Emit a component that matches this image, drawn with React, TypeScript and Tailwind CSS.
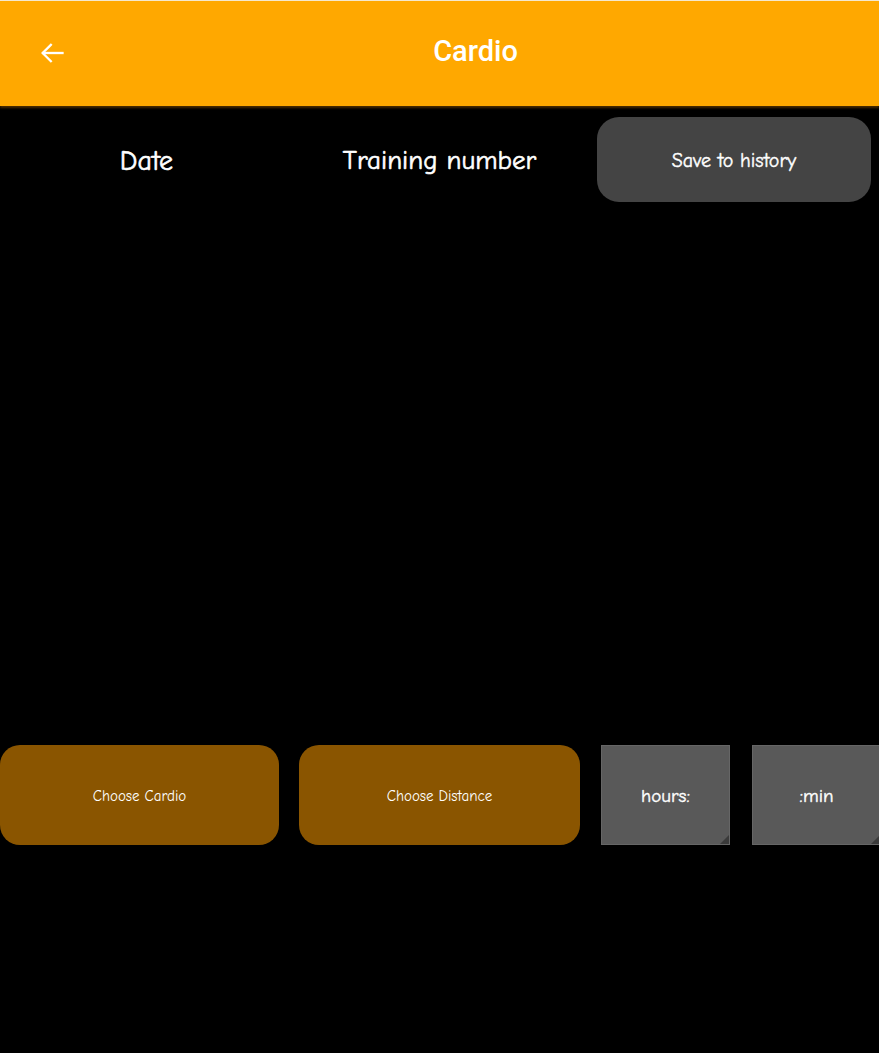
import React from "react";

const comic = { fontFamily: '"Comic Sans MS","Comic Neue","Noto Sans",sans-serif' };

export default function App() {
  return (
    <div className="w-[879px] h-[1053px] bg-black flex flex-col overflow-hidden">
      <div className="h-px bg-[#f6e9cf]" />
      <div className="h-[105px] bg-[#ffa800] flex items-center relative shadow-[0_2px_2px_rgba(120,70,0,0.6)]">
        <div className="w-[104px] flex items-center justify-center -mt-[2px]">
          <svg width="28" height="28" viewBox="0 0 24 24" fill="none" stroke="white" strokeWidth="2" strokeLinecap="square">
            <path d="M21 12H4.5" />
            <path d="M11 5L4 12l7 7" />
          </svg>
        </div>
        <div className="absolute left-0 right-0 top-0 bottom-0 flex items-center justify-center pointer-events-none">
          <span className="text-white text-[29px] font-medium ml-[72px] -mt-[4px]" style={{ fontFamily: "Roboto, sans-serif" }}>
            Cardio
          </span>
        </div>
      </div>
      <div className="flex items-center h-[85px] mt-[11px] [-webkit-text-stroke:0.6px_white]" style={comic}>
        <div className="w-[293px] shrink-0 flex justify-center text-white text-[28px] pt-[3px]">Date</div>
        <div className="w-[293px] shrink-0 flex justify-center text-white text-[27px] pt-[3px]">Training number</div>
        <div className="w-[293px] shrink-0 flex justify-end pr-[8px]">
          <div className="w-[274px] h-[85px] rounded-[22px] bg-[#444444] flex items-center justify-center text-white text-[20px] pt-[2px] [-webkit-text-stroke:0.4px_white]">
            Save to history
          </div>
        </div>
      </div>
      <div className="flex items-stretch h-[100px] mt-[543px]" style={comic}>
        <div className="w-[279px] shrink-0 rounded-[20px] bg-[#8a5500] flex items-center justify-center text-white text-[15px] pt-[2px]">
          Choose Cardio
        </div>
        <div className="w-[281px] shrink-0 ml-[20px] rounded-[20px] bg-[#8a5500] flex items-center justify-center text-white text-[15px] pt-[2px]">
          Choose Distance
        </div>
        <div className="w-[129px] shrink-0 ml-[21px] relative bg-[#595959] border border-[#666] flex items-center justify-center text-white text-[19px] pt-[2px] [-webkit-text-stroke:0.4px_white]">
          hours:
          <div className="absolute right-0 bottom-0 w-0 h-0 border-l-[9px] border-l-transparent border-b-[9px] border-b-[#3a3a3a]" />
        </div>
        <div className="w-[129px] shrink-0 ml-[22px] relative bg-[#595959] border border-[#666] flex items-center justify-center text-white text-[19px] pt-[2px] [-webkit-text-stroke:0.4px_white]">
          :min
          <div className="absolute right-0 bottom-0 w-0 h-0 border-l-[9px] border-l-transparent border-b-[9px] border-b-[#3a3a3a]" />
        </div>
      </div>
    </div>
  );
}
